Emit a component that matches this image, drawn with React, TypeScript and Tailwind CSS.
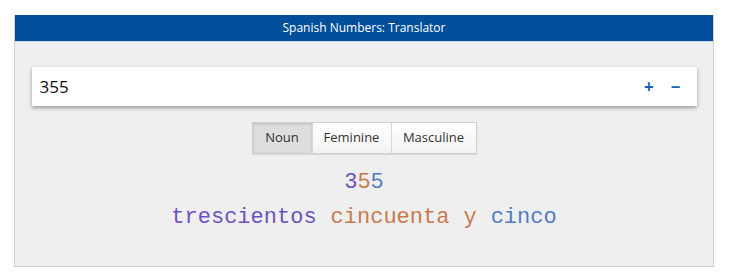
import { useState } from 'react';

const parts = [
    { w: 'trescientos', c: 'text-[#6b52c2]' },
    { w: 'cincuenta', c: 'text-[#c97a4e]' },
    { w: 'y', c: 'text-[#c97a4e]' },
    { w: 'cinco', c: 'text-[#4f7cc9]' },
];

export default function App() {
    const [mode, setMode] = useState('Noun');
    const [value] = useState('355');

    return (
        <div className="w-[731px] h-[277px] bg-white pt-[15px] px-[14px]" style={{ fontFamily: '"Open Sans", "Noto Sans", sans-serif' }}>
            <div className="w-[700px] border border-[#cfcfcf] border-t-0">
                {/* header */}
                <div className="h-[27px] bg-[#014f9b] border-b border-[#c9ddf0] flex items-center justify-center text-white text-[12px]">
                    Spanish Numbers: Translator
                </div>

                <div className="bg-[#efefef] h-[224px] pt-[25px] px-[16px] flex flex-col items-center">
                    {/* input */}
                    <div className="w-[665px] h-[39px] bg-white shadow-[0_2px_4px_rgba(0,0,0,0.35)] flex items-center pl-[8px] pr-[16px]">
                        <span className="flex-1 text-[17px] text-[#111]">{value}</span>
                        <button className="text-[#1663b8] font-bold text-[17px] leading-none mr-[17px]">+</button>
                        <button className="text-[#1663b8] font-bold text-[17px] leading-none">−</button>
                    </div>

                    {/* mode toggle */}
                    <div className="mt-[16px] flex border border-[#d0d0d0] shadow-[0_1px_1px_rgba(0,0,0,0.08)]">
                        {['Noun', 'Feminine', 'Masculine'].map((m, i) => (
                            <button
                                key={m}
                                onClick={() => setMode(m)}
                                className={`h-[30px] text-[13px] text-[#333] ${i > 0 ? 'border-l border-[#d8d8d8]' : ''} ${i === 0 ? 'w-[59px]' : i === 1 ? 'w-[79px]' : 'w-[85px]'} ${mode === m ? 'bg-[#dedede] shadow-[inset_0_1px_3px_rgba(0,0,0,0.15)]' : 'bg-gradient-to-b from-white to-[#f3f3f3]'}`}
                            >
                                {m}
                            </button>
                        ))}
                    </div>

                    {/* result */}
                    <div className="mt-[14px] text-[22px] leading-[30px]" style={{ fontFamily: '"Liberation Mono", monospace' }}>
                        <span className="text-[#6b52c2]">3</span>
                        <span className="text-[#c97a4e]">5</span>
                        <span className="text-[#4f7cc9]">5</span>
                    </div>
                    <div className="mt-[5px] text-[22px] leading-[30px] flex gap-[14px]" style={{ fontFamily: '"Liberation Mono", monospace' }}>
                        {parts.map(p => <span key={p.w} className={p.c}>{p.w}</span>)}
                    </div>
                </div>
            </div>
        </div>
    );
}
